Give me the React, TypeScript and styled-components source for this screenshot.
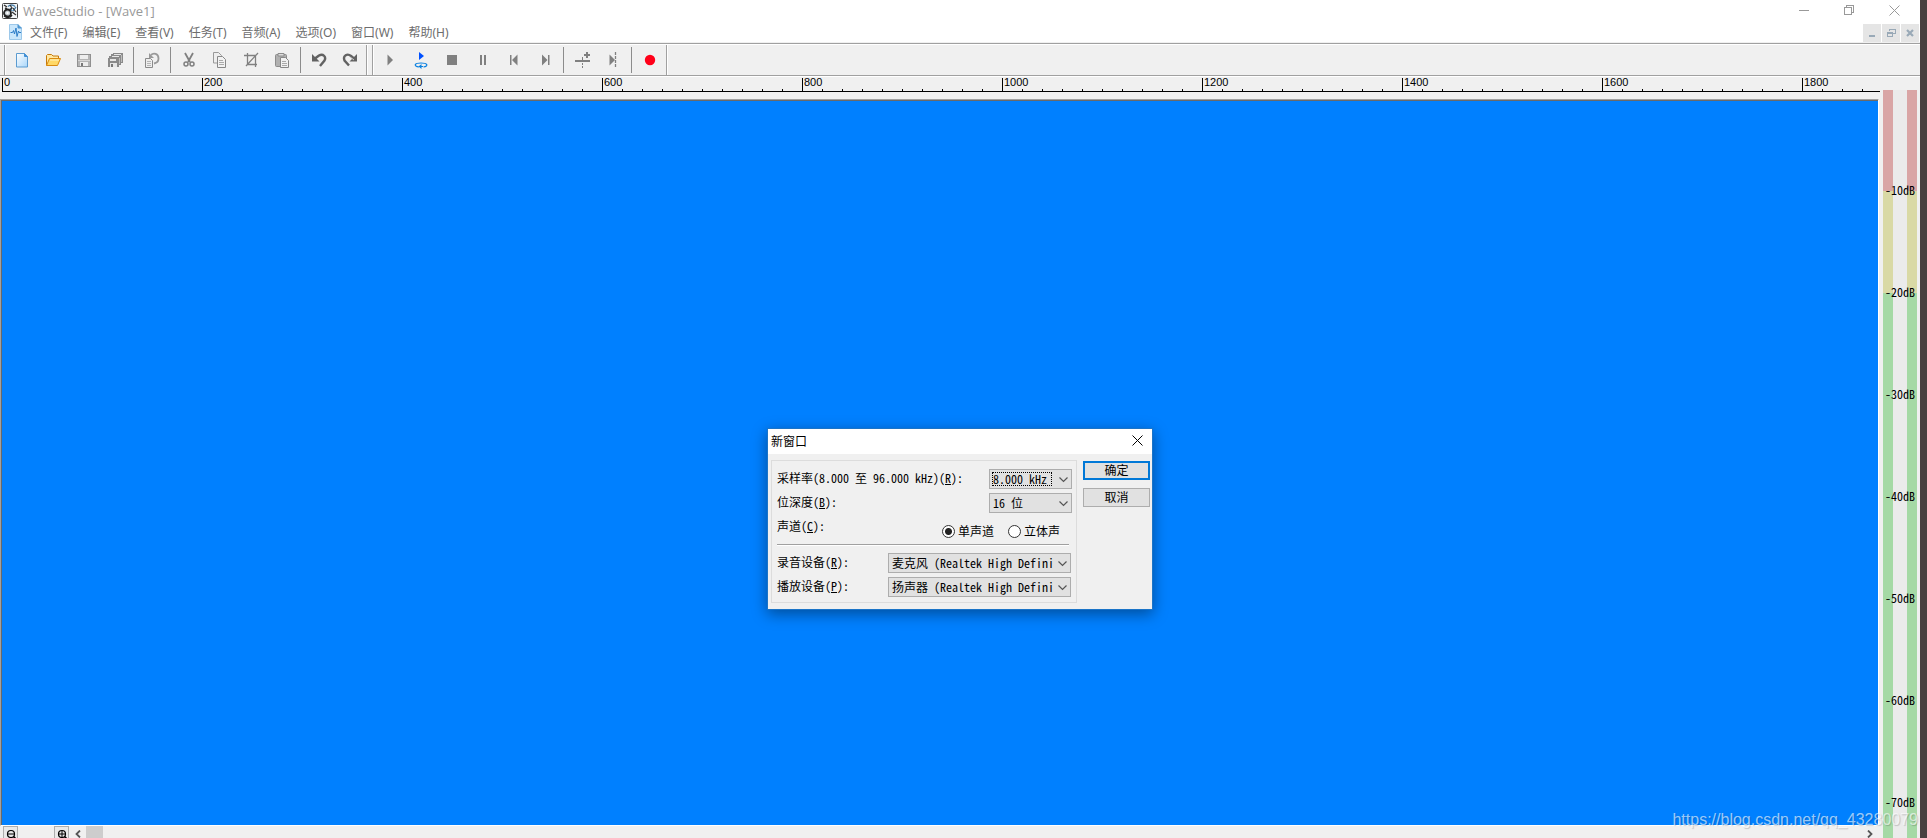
import React from 'react';
import styled, { createGlobalStyle } from 'styled-components';

const UI = "'Noto Sans', 'Noto Sans CJK SC', sans-serif";
const FIXED = "'Noto Sans Mono CJK SC', 'Liberation Mono', 'Noto Sans CJK SC', monospace";

const GlobalStyle = createGlobalStyle`
  * { box-sizing: border-box; }
  body { margin: 0; background: #f0f0f0; }
  button, input, select { margin: 0; font: inherit; color: inherit; }
`;

const Desktop = styled.div`
  display: flex;
  height: 100vh;
  overflow: hidden;
  background: #484040;
  padding-right: 7px;
`;

const AppWindow = styled.div`
  position: relative;
  flex: 1;
  min-width: 0;
  display: flex;
  flex-direction: column;
  background: #f0f0f0;
`;

const TitleBar = styled.header`
  display: flex;
  align-items: center;
  height: 24px;
  padding: 0 10px 2px 2px;
  background: #fff;
`;

const Title = styled.h1`
  flex: 1;
  margin: 0 0 0 5px;
  font: 400 13px/20px 'Open Sans', sans-serif;
  color: #999;
`;

const CaptionButtons = styled.div`
  display: flex;
  gap: 14px;
  margin-bottom: 2px;
`;

const CaptionButton = styled.button`
  width: 31px;
  height: 20px;
  display: flex;
  align-items: center;
  justify-content: center;
  border: 0;
  padding: 0;
  background: none;
`;

const MenuBar = styled.nav`
  display: flex;
  align-items: stretch;
  height: 18px;
  padding-left: 8px;
  background: #fff;
`;

const MenuItems = styled.div`
  flex: 1;
  display: flex;
  align-items: center;
  gap: 15px;
  margin-left: 6px;
`;

const MenuItem = styled.button`
  border: 0;
  padding: 0;
  background: none;
  font: 400 12px/18px ${UI};
  color: #6d6d6d;
  white-space: nowrap;
`;

const ChildButtons = styled.div`
  display: flex;
  gap: 1px;
  padding-right: 1px;
`;

const ChildButton = styled.button`
  width: 18px;
  height: 18px;
  display: flex;
  align-items: center;
  justify-content: center;
  border: 0;
  padding: 0;
  background: #e5e5e5;
`;

const ToolStrip = styled.div`
  display: flex;
  height: 33px;
  margin-top: 1px;
  border-top: 1px solid #a0a0a0;
  border-bottom: 1px solid #a0a0a0;
  box-shadow: inset 0 1px #fff, 0 1px #fff;
  padding: 1px 0 0 4px;
`;

const ToolGroup = styled.div`
  display: flex;
  align-items: center;
  border-left: 1px solid #a0a0a0;
  border-right: 1px solid #a0a0a0;
  box-shadow: inset 1px 0 #fff, 1px 0 #fff;
  padding: 0 1px;
  margin-right: 5px;
`;

const ToolButton = styled.button`
  width: 31px;
  height: 28px;
  display: flex;
  align-items: center;
  justify-content: center;
  border: 0;
  padding: 0;
  background: none;
`;

const ToolSeparator = styled.span`
  width: 1px;
  height: 26px;
  margin: 0 2px 0 3px;
  background: #8c8c8c;
`;

const Body = styled.div`
  flex: 1;
  min-height: 0;
  display: flex;
`;

const Editor = styled.main`
  position: relative;
  flex: 1;
  min-width: 0;
  display: flex;
  flex-direction: column;
`;

const Ruler = styled.div`
  display: flex;
  height: 14px;
  margin: 2px 0 7px 2px;
  border-bottom: 1px solid #000;
`;

const RulerCell = styled.div`
  flex: none;
  width: 200px;
  border-left: 1px solid #000;
  padding-left: 1px;
  font: 400 11px/8px 'Liberation Sans', sans-serif;
  color: #000;
  background: repeating-linear-gradient(to right, transparent 0 19px, #000 19px 20px) 0 100% / 100% 2px no-repeat;
  &:last-child {
    flex: 1;
    min-width: 0;
  }
`;

const WaveView = styled.section`
  flex: 1;
  min-height: 0;
  border: 1px solid #a0a0a0;
  border-right-color: #fff;
  border-bottom-color: #fff;
  margin-right: 1px;
  background: #0080ff;
  box-shadow: inset 1px 1px #696969;
`;

const BottomBar = styled.div`
  flex: none;
  display: flex;
  align-items: flex-start;
  height: 12px;
  overflow: hidden;
  padding: 0 2px 0 3px;
`;

const ZoomButton = styled.button`
  flex: none;
  display: flex;
  align-items: flex-start;
  width: 15px;
  height: 17px;
  border: 1px solid #adadad;
  padding: 2px 0 0 2px;
  background: #e9e9e9;
`;

const ZoomTrack = styled.span`
  width: 36px;
`;

const ScrollButton = styled.button`
  flex: none;
  width: 17px;
  height: 15px;
  display: flex;
  align-items: center;
  justify-content: center;
  border: 0;
  padding: 0;
  background: none;
`;

const ScrollTrack = styled.div`
  flex: 1;
`;

const ScrollThumb = styled.div`
  width: 17px;
  height: 17px;
  background: #cdcdcd;
`;

const Meter = styled.aside`
  position: relative;
  flex: none;
  display: flex;
  width: 40px;
  padding: 14px 3px 0;
`;

const Channel = styled.div`
  width: 10px;
  background: linear-gradient(#d9a5a5 0 101px, #d9d9a5 101px 203px, #a5d9a5 203px);
`;

const MeterGap = styled.div`
  flex: 1;
  background: #ebebeb;
`;

const Scale = styled.ol`
  position: absolute;
  top: 63px;
  left: 5px;
  margin: 0;
  padding: 0;
  list-style: none;
  font: 400 12px/102px ${FIXED};
  color: #000;
  white-space: nowrap;
`;

const Watermark = styled.p`
  position: absolute;
  right: 2px;
  bottom: 8px;
  margin: 0;
  font: 400 16px/20px 'Liberation Sans', sans-serif;
  color: rgba(255, 255, 255, 0.62);
  text-shadow: 1px 1px 1px rgba(0, 0, 0, 0.18);
`;

const DialogLayer = styled.div`
  position: absolute;
  top: 428px;
  left: 0;
  right: 0;
  display: flex;
  justify-content: center;
`;

const Dialog = styled.form`
  width: 386px;
  border: 1px solid #1a74c8;
  background: #f0f0f0;
  box-shadow: 0 4px 14px rgba(0, 0, 0, 0.4);
  font: 400 12px/16px ${FIXED};
  color: #000;
`;

const DialogTitle = styled.div`
  display: flex;
  align-items: center;
  justify-content: space-between;
  height: 25px;
  padding: 0 9px 2px 3px;
  background: #fff;
`;

const DialogName = styled.h2`
  margin: 0;
  font: 400 12px/20px 'Noto Sans CJK SC', sans-serif;
`;

const CloseButton = styled.button`
  display: flex;
  border: 0;
  padding: 0;
  background: none;
`;

const DialogBody = styled.div`
  display: flex;
  align-items: flex-start;
  gap: 6px;
  padding: 6px 2px 6px 3px;
`;

const Group = styled.div`
  flex: 1;
  min-width: 0;
  height: 143px;
  border: 1px solid #dcdcdc;
  padding: 8px 4px 0 5px;
`;

const Field = styled.div`
  display: flex;
  justify-content: space-between;
  height: 24px;
  white-space: pre;
`;

const Label = styled.label`
  line-height: 17px;
`;

const SelectBox = styled.span<{ $wide?: boolean }>`
  position: relative;
  flex: none;
  width: ${(p) => (p.$wide ? 183 : 83)}px;
  height: 20px;
  margin-right: ${(p) => (p.$wide ? 1 : 0)}px;
`;

const Select = styled.select`
  appearance: none;
  display: block;
  width: 100%;
  height: 20px;
  border: 1px solid #adadad;
  border-radius: 0;
  padding: 0 16px 0 3px;
  background: #e1e1e1;
  line-height: 18px;
`;

const Chevron = styled.svg`
  position: absolute;
  top: 8px;
  right: 4px;
  pointer-events: none;
`;

const FocusFrame = styled.span`
  position: absolute;
  top: 3px;
  left: 3px;
  width: 60px;
  height: 14px;
  border: 1px dotted #000;
  pointer-events: none;
`;

const Radios = styled.div`
  display: flex;
  gap: 14px;
  padding: 5px 12px 0 0;
`;

const RadioLabel = styled.label`
  display: flex;
  align-items: center;
  gap: 3px;
  height: 18px;
`;

const Radio = styled.input`
  appearance: none;
  width: 13px;
  height: 13px;
  border: 1px solid #333;
  border-radius: 50%;
  background: #fff;
  &:checked {
    background: radial-gradient(circle, #222 0 3px, #fff 4px);
  }
`;

const Divider = styled.hr`
  height: 2px;
  margin: 3px 3px 7px 0;
  border: 0;
  border-top: 1px solid #a0a0a0;
  background: #fff;
`;

const DialogActions = styled.div`
  display: flex;
  flex-direction: column;
  gap: 8px;
  padding-top: 1px;
`;

const ActionButton = styled.button<{ $primary?: boolean }>`
  display: flex;
  justify-content: center;
  width: 67px;
  height: 19px;
  border: ${(p) => (p.$primary ? '2px solid #0078d7' : '1px solid #adadad')};
  padding: 0 0 2px;
  background: #e1e1e1;
  line-height: ${(p) => (p.$primary ? 13 : 15)}px;
`;

const Icon = ({ children, size = 16, crisp }: { children: React.ReactNode; size?: number; crisp?: boolean }) => (
  <svg width={size} height={size} viewBox={`0 0 ${size} ${size}`} fill="none" shapeRendering={crisp ? 'crispEdges' : 'auto'} aria-hidden="true">
    {children}
  </svg>
);

const AppIcon = () => (
  <Icon>
    <rect x=".5" y=".5" width="15" height="15" rx="1" fill="#f4f7f9" stroke="#444" />
    <path d="M2 2l3 2M3 5l2 1" stroke="#333" strokeWidth="1.500" />
    <path d="M6 3.500c2-2 5-2 7 0M11 8l3-4M8 5l2 3" stroke="#4d83ad" strokeWidth="1.300" />
    <path d="M8 2l2 3-2 2M11 5l3 4M10 9l4 3" stroke="#333" strokeWidth="1.200" />
    <circle cx="5.500" cy="10" r="3.500" stroke="#222" strokeWidth="1.800" fill="#c4ccd1" />
    <path d="M2 13c3 2 6 2 8-1" stroke="#222" strokeWidth="1.500" />
    <circle cx="5.500" cy="10" r="1.200" fill="#fff" />
  </Icon>
);

const DocIcon = () => (
  <Icon>
    <path d="M1.500.5h8.500l3.500 3.500v11.500h-12z" fill="#c9e6fb" stroke="#9cc8ea" />
    <path d="M10 .5v3.500h3.500" fill="#4f9bd8" stroke="#4f92cc" />
    <path d="M2.500 8.500h2l1-2 1 3.500 1.500-6 1 8.500 1.500-5.500.5 1.500h2" stroke="#2b7cc8" />
  </Icon>
);

const NewIcon = () => (
  <Icon>
    <defs>
      <linearGradient id="sheet" x1="0" y1="0" x2="1" y2="1">
        <stop offset="0" stopColor="#fff" />
        <stop offset="1" stopColor="#a9d6fa" />
      </linearGradient>
    </defs>
    <path d="M2.500 1.500h8l3 3v10.500h-11z" fill="url(#sheet)" stroke="#5b9bd0" />
    <path d="M10.500 1.500v3h3" fill="#3f8fd6" stroke="#3f8fd6" />
  </Icon>
);

const OpenIcon = () => (
  <Icon>
    <path d="M1.500 13.500v-10l1-1h4l1.500 1.500h5.500v3" fill="#ffe9a3" stroke="#c77a0a" />
    <path d="M1.500 13.500l3-7h11l-3 7z" fill="#ffd866" stroke="#d98a10" />
    <path d="M5 8h9" stroke="#fff3c4" />
  </Icon>
);

const SaveIcon = () => (
  <Icon crisp>
    <path d="M1 2h14v13H1z" fill="#909090" />
    <path d="M2 3h12v11H2z" fill="#b4b4b4" />
    <path d="M4 3h8v4H4z" fill="#ededed" />
    <path d="M2 8h12v1H2z" fill="#d6d6d6" />
    <path d="M4 10h8v4H4z" fill="#ececec" />
    <path d="M5 11h2v3H5z" fill="#777" />
  </Icon>
);

const SaveAllIcon = () => (
  <Icon crisp>
    <path d="M6 1h10v10h-2v2h-2v2H1V6h1V4h2V2h2z" fill="#8a8a8a" />
    <path d="M7 2h7v1H7zM5 4h7v1H5zM3 7h6v2H3zM3 11h7v4H3z" fill="#e6e6e6" />
    <path d="M14 3h1v7h-1zM12 6h1v6h-1z" fill="#bdbdbd" />
    <path d="M4 12h2v3H4z" fill="#777" />
  </Icon>
);

const RevertIcon = () => (
  <Icon>
    <path d="M1.500 6.500h5l2 2v7h-7z" fill="#eee" stroke="#8a8a8a" />
    <path d="M3 9.500h4M3 11.500h4M3 13.500h4" stroke="#b5b5b5" />
    <path d="M7 3C9.500.5 14.500 1.500 14.500 6.500c0 3-2 4.500-4.500 5" stroke="#999" strokeWidth="1.800" />
    <path d="M5 1v5h5z" fill="#999" />
  </Icon>
);

const CutIcon = () => (
  <Icon>
    <path d="M4 1l5 9M12 1L7 10" stroke="#808080" strokeWidth="1.800" />
    <circle cx="5" cy="12" r="2" stroke="#808080" strokeWidth="1.500" />
    <circle cx="11" cy="12" r="2" stroke="#808080" strokeWidth="1.500" />
  </Icon>
);

const CopyIcon = () => (
  <Icon>
    <path d="M1.500.5h5l3 3v7.500h-8z" fill="#eee" stroke="#999" />
    <path d="M5.500 4.500h5l3 3v8h-8z" fill="#f2f2f2" stroke="#888" />
    <path d="M7 8.500h4M7 10.500h5M7 12.500h5" stroke="#aaa" />
  </Icon>
);

const CropIcon = () => (
  <Icon>
    <path d="M4.500 1v11.500H14M1 3.500h11.500V15M3 14L15 1" stroke="#808080" strokeWidth="1.300" />
  </Icon>
);

const PasteIcon = () => (
  <Icon>
    <rect x="1.500" y="2.500" width="11" height="12" rx="1" fill="#b0b0b0" stroke="#8c8c8c" />
    <path d="M4 1.500h6v2.500H4z" fill="#ddd" stroke="#8c8c8c" />
    <path d="M6.500 5.500h5l3 3v7h-8z" fill="#f2f2f2" stroke="#888" />
    <path d="M8 9.500h4M8 11.500h5M8 13.500h5" stroke="#aaa" />
  </Icon>
);

const UndoIcon = () => (
  <Icon>
    <path d="M4 6.500l4-3C12 1 15.500 5 13.500 8.500L9 14" stroke="#626262" strokeWidth="2.400" />
    <path d="M1 2v7.500h7.500z" fill="#626262" />
  </Icon>
);

const RedoIcon = () => (
  <Icon>
    <path d="M12 6.500L9 4C5.500 1 .5 3.500 2.500 8.500L7 13.500" stroke="#626262" strokeWidth="2.400" />
    <path d="M15 2v7.500H7.500z" fill="#626262" />
    <path d="M8 5l4 3" stroke="#ccc" />
  </Icon>
);

const PlayIcon = () => (
  <Icon>
    <path d="M5.500 2.500v11l5.500-5.500z" fill="#808080" />
  </Icon>
);

const LoopIcon = () => (
  <Icon size={18}>
    <path d="M7 1v8l5-4z" fill="#0050ff" />
    <path d="M7 16C1 15 2.500 12 9 12s8 3 2.500 4" stroke="#0a80e0" strokeWidth="1.200" />
    <path d="M9.500 13v5l-3-2.500z" fill="#0a80e0" />
    <path d="M8 15.500h3" stroke="#0a80e0" />
  </Icon>
);

const StopIcon = () => (
  <Icon crisp>
    <path d="M3 3h10v10H3z" fill="#808080" />
  </Icon>
);

const PauseIcon = () => (
  <Icon crisp>
    <path d="M5 3h2v10H5zM9 3h2v10H9z" fill="#808080" />
  </Icon>
);

const PrevIcon = () => (
  <Icon>
    <path d="M4 3h1.500v10H4zM11.500 2.500v11L6 8z" fill="#808080" />
  </Icon>
);

const NextIcon = () => (
  <Icon>
    <path d="M11 3h1.500v10H11zM5 2.500v11L10.500 8z" fill="#808080" />
  </Icon>
);

const MarkerIcon = () => (
  <Icon size={18} crisp>
    <path d="M2 9h15v2H2zM11 3h6v2h-6zM13 1h2v6h-2z" fill="#808080" />
    <path d="M9 6h1v3H9zM9 12h1v2H9zM9 15h1v2H9z" fill="#808080" />
  </Icon>
);

const SkipIcon = () => (
  <Icon>
    <path d="M4.500 2.500v11L10 8z" fill="#808080" />
    <path d="M10.500 0v16" stroke="#808080" strokeWidth="1.300" strokeDasharray="3 1" />
  </Icon>
);

const RecordIcon = () => (
  <Icon>
    <circle cx="8" cy="8" r="5.200" fill="#ff0019" />
  </Icon>
);

const MagnifierIcon = ({ plus }: { plus?: boolean }) => (
  <Icon size={11}>
    <circle cx="5" cy="5" r="3.500" stroke="#000" strokeWidth="1.200" />
    <path d={plus ? 'M2 5h6M5 2v6' : 'M2 5h6'} stroke="#000" />
    <path d="M7.500 7.500L10.500 10.500" stroke="#000" strokeWidth="1.600" />
  </Icon>
);

const ArrowIcon = ({ right }: { right?: boolean }) => (
  <Icon size={8}>
    <path d={right ? 'M2 0.500L5.500 4 2 7.500' : 'M6 0.500L2.500 4 6 7.500'} stroke="#555" strokeWidth="1.800" />
  </Icon>
);

type Tool = [string, React.ComponentType] | null;

const fileTools: Tool[] = [
  ['新建', NewIcon], ['打开', OpenIcon], ['保存', SaveIcon], ['全部保存', SaveAllIcon], null,
  ['还原', RevertIcon], null,
  ['剪切', CutIcon], ['复制', CopyIcon], ['裁剪', CropIcon], ['粘贴', PasteIcon], null,
  ['撤消', UndoIcon], ['重做', RedoIcon],
];

const playTools: Tool[] = [
  ['播放', PlayIcon], ['循环播放', LoopIcon], ['停止', StopIcon], ['暂停', PauseIcon],
  ['后退', PrevIcon], ['前进', NextIcon], null,
  ['添加标记', MarkerIcon], ['下一个标记', SkipIcon], null,
  ['录音', RecordIcon],
];

const menus = ['文件(F)', '编辑(E)', '查看(V)', '任务(T)', '音频(A)', '选项(O)', '窗口(W)', '帮助(H)'];
const rulerMarks = Array.from({ length: 10 }, (_, i) => i * 200);
const levels = [10, 20, 30, 40, 50, 60, 70];

const Tools = ({ items }: { items: Tool[] }) => (
  <ToolGroup>
    {items.map((tool, i) => {
      if (!tool) return <ToolSeparator key={i} />;
      const [name, Glyph] = tool;
      return <ToolButton key={i} aria-label={name}><Glyph /></ToolButton>;
    })}
  </ToolGroup>
);

const Dropdown = ({ id, value, wide, focused }: { id: string; value: string; wide?: boolean; focused?: boolean }) => (
  <SelectBox $wide={wide}>
    <Select id={id} defaultValue={value}>
      <option>{value}</option>
    </Select>
    {focused && <FocusFrame />}
    <Chevron width="9" height="6" viewBox="0 0 9 6" fill="none" aria-hidden="true">
      <path d="M.5.5l4 4 4-4" stroke="#555" strokeWidth="1.200" />
    </Chevron>
  </SelectBox>
);

const NewWindowDialog = () => (
  <Dialog role="dialog" aria-labelledby="dialog-name" onSubmit={(e) => e.preventDefault()}>
    <DialogTitle>
      <DialogName id="dialog-name">新窗口</DialogName>
      <CloseButton type="button" aria-label="关闭">
        <Icon size={11}><path d="M.5.5l10 10M10.500.5l-10 10" stroke="#000" /></Icon>
      </CloseButton>
    </DialogTitle>
    <DialogBody>
      <Group>
        <Field>
          <Label htmlFor="rate">采样率(8.000 至 96.000 kHz)(<u>R</u>):</Label>
          <Dropdown id="rate" value="8.000 kHz" focused />
        </Field>
        <Field>
          <Label htmlFor="depth">位深度(<u>B</u>):</Label>
          <Dropdown id="depth" value="16 位" />
        </Field>
        <Field role="radiogroup" aria-labelledby="channels">
          <Label as="span" id="channels">声道(<u>C</u>):</Label>
          <Radios>
            <RadioLabel><Radio type="radio" name="channels" defaultChecked />单声道</RadioLabel>
            <RadioLabel><Radio type="radio" name="channels" />立体声</RadioLabel>
          </Radios>
        </Field>
        <Divider />
        <Field>
          <Label htmlFor="input">录音设备(<u>R</u>):</Label>
          <Dropdown id="input" value="麦克风 (Realtek High Defini" wide />
        </Field>
        <Field>
          <Label htmlFor="output">播放设备(<u>P</u>):</Label>
          <Dropdown id="output" value="扬声器 (Realtek High Defini" wide />
        </Field>
      </Group>
      <DialogActions>
        <ActionButton $primary type="submit">确定</ActionButton>
        <ActionButton type="button">取消</ActionButton>
      </DialogActions>
    </DialogBody>
  </Dialog>
);

export default function App() {
  return (
    <>
      <GlobalStyle />
      <Desktop>
        <AppWindow>
          <TitleBar>
            <AppIcon />
            <Title>WaveStudio - [Wave1]</Title>
            <CaptionButtons>
              <CaptionButton aria-label="最小化">
                <Icon size={11} crisp><path d="M0 5.500h10" stroke="#999" /></Icon>
              </CaptionButton>
              <CaptionButton aria-label="还原">
                <Icon size={11} crisp><path d="M.5 2.500h7v7h-7zM2.500 2V.5h7v7H8" stroke="#999" /></Icon>
              </CaptionButton>
              <CaptionButton aria-label="关闭">
                <Icon size={11}><path d="M.5.5l10 10M10.500.5l-10 10" stroke="#999" /></Icon>
              </CaptionButton>
            </CaptionButtons>
          </TitleBar>
          <MenuBar>
            <DocIcon />
            <MenuItems>
              {menus.map((m) => <MenuItem key={m}>{m}</MenuItem>)}
            </MenuItems>
            <ChildButtons>
              <ChildButton aria-label="最小化子窗口">
                <Icon size={10} crisp><path d="M2 7h6v2H2z" fill="#99a9b7" /></Icon>
              </ChildButton>
              <ChildButton aria-label="还原子窗口">
                <Icon size={10} crisp>
                  <path d="M3 3V1.500h6v4H7" stroke="#99a9b7" />
                  <path d="M1 4h6v2H1zM1 8h6v1H1zM1 4h1v5H1zM6 4h1v5H6zM3 1h6v1H3z" fill="#99a9b7" />
                </Icon>
              </ChildButton>
              <ChildButton aria-label="关闭子窗口">
                <Icon size={10}><path d="M2 2l6 6M8 2L2 8" stroke="#99a9b7" strokeWidth="2.200" /></Icon>
              </ChildButton>
            </ChildButtons>
          </MenuBar>
          <ToolStrip role="toolbar">
            <Tools items={fileTools} />
            <Tools items={playTools} />
          </ToolStrip>
          <Body>
            <Editor>
              <Ruler>
                {rulerMarks.map((n) => <RulerCell key={n}>{n}</RulerCell>)}
              </Ruler>
              <WaveView aria-label="Wave1" />
              <BottomBar>
                <ZoomButton aria-label="缩小"><MagnifierIcon /></ZoomButton>
                <ZoomTrack />
                <ZoomButton aria-label="放大"><MagnifierIcon plus /></ZoomButton>
                <ScrollButton aria-label="向左滚动"><ArrowIcon /></ScrollButton>
                <ScrollTrack><ScrollThumb /></ScrollTrack>
                <ScrollButton aria-label="向右滚动"><ArrowIcon right /></ScrollButton>
              </BottomBar>
            </Editor>
            <Meter aria-label="电平">
              <Channel />
              <MeterGap />
              <Channel />
              <Scale>
                {levels.map((n) => <li key={n}>-{n}dB</li>)}
              </Scale>
            </Meter>
          </Body>
          <DialogLayer>
            <NewWindowDialog />
          </DialogLayer>
          <Watermark>https://blog.csdn.net/qq_43280079</Watermark>
        </AppWindow>
      </Desktop>
    </>
  );
}
